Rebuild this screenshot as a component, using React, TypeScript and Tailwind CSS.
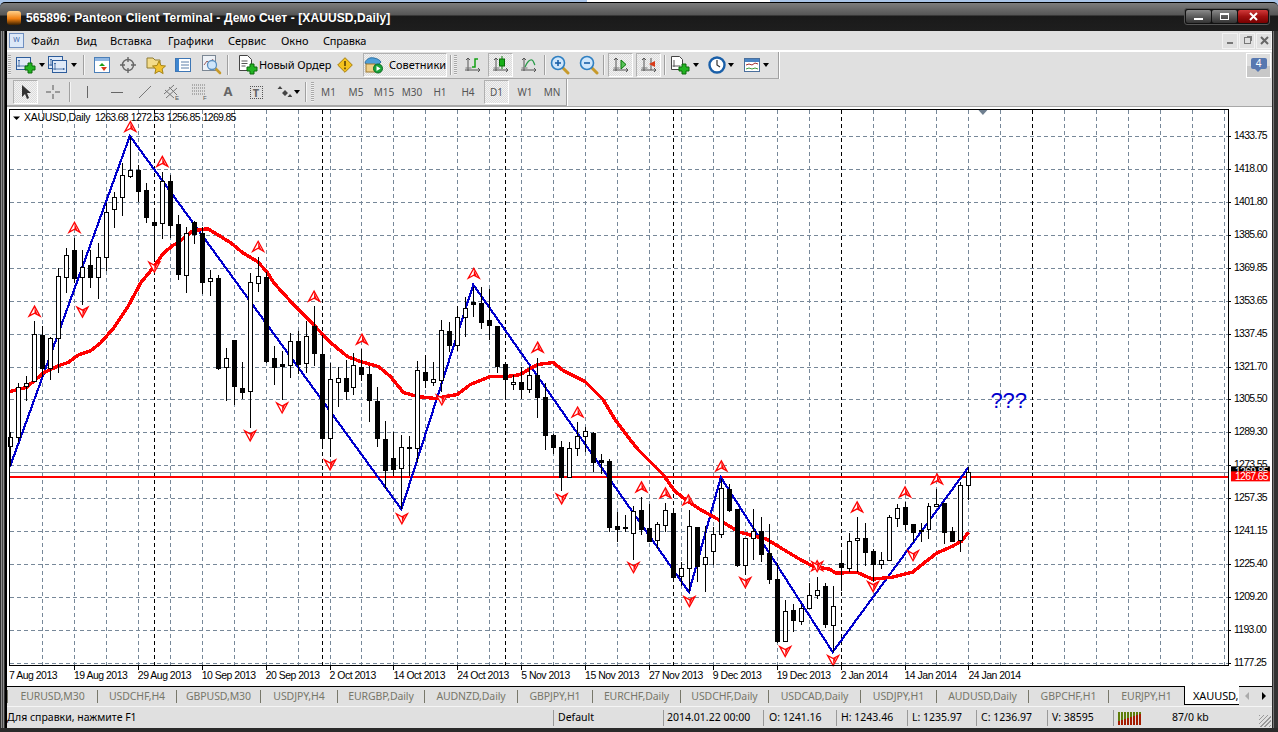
import React from "react";

// hi, lo, bodyTop, bodyBottom, white
const candles: [number, number, number, number, number][] = [
  [433,467,438,447,1],[383,443,387,438,1],[376,402,383,386,1],[321,382,334,381,1],[326,377,335,368,0],[337,380,338,368,1],
  [268,373,276,338,1],[248,293,255,277,1],[238,283,250,278,0],[250,305,267,277,1],[250,288,265,277,0],[243,299,257,277,1],
  [203,271,212,257,1],[192,228,197,209,1],[163,216,175,197,1],[137,178,170,176,1],[165,202,170,191,0],[183,223,190,217,0],
  [208,262,222,225,0],[172,239,181,223,1],[175,238,181,225,0],[215,280,224,274,0],[227,293,233,275,1],[221,244,222,234,0],
  [227,294,233,282,0],[270,296,278,281,1],[275,370,278,368,0],[348,402,358,367,1],[340,406,340,386,0],[362,400,388,392,0],
  [273,429,282,391,1],[257,292,276,283,1],[272,363,277,361,0],[346,385,358,367,0],[351,401,364,366,0],[333,378,341,365,1],
  [331,374,341,364,0],[321,373,336,363,1],[306,366,326,353,0],[335,448,354,439,0],[363,458,379,439,1],[367,408,378,382,1],
  [360,401,378,391,0],[353,395,365,387,1],[349,381,367,374,0],[366,423,374,401,0],[387,448,402,439,0],[422,490,440,471,0],
  [433,477,459,470,0],[436,510,448,469,1],[437,477,448,449,1],[361,463,370,449,1],[355,388,372,380,0],[362,386,379,382,1],
  [320,392,330,380,1],[322,352,331,345,0],[306,351,317,345,1],[297,337,308,317,1],[287,317,302,304,0],[287,329,303,322,0],
  [289,340,320,325,0],[326,373,326,366,0],[364,400,364,379,0],[375,390,382,384,1],[367,400,382,389,0],[367,393,375,389,1],
  [358,419,375,397,0],[383,451,397,436,0],[435,455,436,448,0],[442,492,448,478,0],[443,479,449,478,1],[423,457,437,449,1],
  [428,453,432,437,1],[433,473,434,463,0],[455,475,461,463,0],[460,533,462,528,0],[513,543,527,530,0],[516,533,528,529,0],
  [507,561,512,534,1],[498,536,511,530,0],[505,543,529,542,0],[523,550,525,541,1],[504,533,511,526,1],[513,578,514,578,0],
  [563,587,569,577,1],[511,593,527,569,1],[528,583,528,567,0],[527,593,558,565,1],[528,566,535,552,1],[480,539,489,535,1],
  [485,513,490,511,0],[510,568,510,566,0],[539,576,539,566,1],[510,561,532,539,1],[518,563,532,555,0],[525,585,554,580,0],
  [564,644,580,642,0],[601,643,612,642,1],[605,633,611,621,0],[605,626,609,622,1],[584,609,596,609,1],[578,600,591,596,1],
  [584,629,587,625,0],[587,653,607,626,1],[553,592,564,568,0],[534,573,542,569,1],[518,573,539,541,1],[524,567,539,553,0],
  [550,583,552,565,0],[553,570,561,565,1],[516,562,518,561,1],[505,528,509,519,1],[503,532,508,525,0],[525,543,525,533,0],
  [524,543,531,532,0],[504,540,507,530,1],[490,508,505,507,1],[504,545,504,533,0],[528,543,532,542,0],[483,553,486,541,1],
  [468,501,473,486,1],
];

const maLine = "9,392 25,388 43,373 58,366 67,363 78,355 90,351 100,343 113,328 127,307 140,283 153,267 163,253 173,245 177,243 192,231 207,229 217,235 230,243 242,253 257,262 267,273 273,283 293,305 310,322 330,343 347,357 360,362 378,367 390,377 403,393 417,397 435,399 457,395 470,385 490,377 507,377 520,375 537,365 553,363 563,371 585,382 603,400 615,420 630,440 638,450 650,462 663,475 675,492 688,502 700,510 718,520 740,533 767,540 780,548 800,560 813,567 830,570 836,574 857,573 873,580 893,578 913,573 923,565 937,554 953,547 962,542 969,533";
const zigzag = "9,467 129,136 401,510 473,285 689,593 721,478 833,653 969,468";

const upMarks = [[33,312],[73,228],[129,127],[161,162],[257,247],[313,297],[361,340],[473,274],[537,348],[577,413],[641,488],[665,494],[688,501],[721,467],[817,567],[857,508],[905,493],[937,480]];
const downMarks = [[81,312],[153,267],[249,436],[281,408],[329,465],[401,519],[441,400],[561,499],[633,568],[689,602],[745,583],[785,652],[817,567],[833,661],[873,587],[913,556]];

const prices = ["1433.75","1418.00","1401.80","1385.60","1369.85","1353.65","1337.45","1321.70","1305.50","1289.30","1273.55","1257.35","1241.15","1225.40","1209.20","1193.00","1177.25"];
const dates = ["7 Aug 2013","19 Aug 2013","29 Aug 2013","10 Sep 2013","20 Sep 2013","2 Oct 2013","14 Oct 2013","24 Oct 2013","5 Nov 2013","15 Nov 2013","27 Nov 2013","9 Dec 2013","19 Dec 2013","2 Jan 2014","14 Jan 2014","24 Jan 2014"];
const separators = [153, 321, 505, 673, 841, 1033];

const tabs = [
  { name: "EURUSD,M30", w: "w-[90px]" },
  { name: "USDCHF,H4", w: "w-[79px]" },
  { name: "GBPUSD,M30", w: "w-[84px]" },
  { name: "USDJPY,H4", w: "w-[77px]" },
  { name: "EURGBP,Daily", w: "w-[87px]" },
  { name: "AUDNZD,Daily", w: "w-[93px]" },
  { name: "GBPJPY,H1", w: "w-[75px]" },
  { name: "EURCHF,Daily", w: "w-[88px]" },
  { name: "USDCHF,Daily", w: "w-[88px]" },
  { name: "USDCAD,Daily", w: "w-[92px]" },
  { name: "USDJPY,H1", w: "w-[76px]" },
  { name: "AUDUSD,Daily", w: "w-[92px]" },
  { name: "GBPCHF,H1", w: "w-[80px]" },
  { name: "EURJPY,H1", w: "w-[76px]" },
];

const Mark = ({ x, y, up }: { x: number; y: number; up: boolean }) => (
  <g transform={`translate(${x + 0.5} ${y}) scale(1 ${up ? 1 : -1})`}>
    <path d="M0 -5.500L5.500 4.500L0 1.500L-5.500 4.500Z" fill="#fff" stroke="#ff0000" strokeWidth="1.300" />
    <path d="M0 -4.500L3.200 3L0 1Z" fill="#ff0000" />
  </g>
);

const axisSize = 10.5;
const axisSpacing = -0.7;

const Chart = () => (
  <svg width="1265" height="579" viewBox="7 108 1265 579" className="block bg-white font-['Liberation_Sans',sans-serif]">
    <g shapeRendering="crispEdges" stroke="#778899" strokeDasharray="4 3">
      {prices.map((_, i) => (
        <line key={i} x1="9" x2="1229" y1={136.5 + i * 33} y2={136.5 + i * 33} />
      ))}
      {Array.from({ length: 38 }, (_, i) => (
        <line key={i} x1={41.5 + i * 32} x2={41.5 + i * 32} y1="110" y2="666" />
      ))}
    </g>
    <g shapeRendering="crispEdges" stroke="#000" strokeDasharray="4 3">
      {separators.map((x) => (
        <line key={x} x1={x + 0.5} x2={x + 0.5} y1="110" y2="666" />
      ))}
    </g>
    <g shapeRendering="crispEdges">
      <line x1="9" x2="1229" y1="473.5" y2="473.5" stroke="#8a96a3" />
      <rect x="9" y="477" width="1220" height="2" fill="#ff0000" />
    </g>
    <polyline points={zigzag} fill="none" stroke="#0000cd" strokeWidth="2.200" shapeRendering="crispEdges" />
    <polyline points={maLine} fill="none" stroke="#ff0000" strokeWidth="3.400" strokeLinejoin="round" shapeRendering="crispEdges" />
    {upMarks.map(([x, y]) => <Mark key={`u${x}`} x={x} y={y} up />)}
    {downMarks.map(([x, y]) => <Mark key={`d${x}`} x={x} y={y} up={false} />)}
    <g shapeRendering="crispEdges">
      {candles.map(([hi, lo, top, bot, white], i) => {
        const x = 9 + i * 8;
        return (
          <g key={i}>
            <line x1={x + 0.5} x2={x + 0.5} y1={hi} y2={lo} stroke="#000" />
            <rect x={x - 1.5} y={top + 0.5} width="4" height={Math.max(bot - top, 1)} fill={white ? "#fff" : "#000"} stroke="#000" />
          </g>
        );
      })}
    </g>
    {/* chart frame */}
    <rect x="8.500" y="109.500" width="1221" height="557" fill="none" stroke="#000" shapeRendering="crispEdges" />
    <path d="M979 110h9l-4.500 5z" fill="#6f7f90" />
    <path d="M12 116.500h7l-3.500 3.500z" fill="#000" />
    <text x="23" y="121" fontSize="10.500" letterSpacing="-0.3" fill="#000">XAUUSD,Daily</text>
    <text x="94" y="121" fontSize={axisSize} letterSpacing={axisSpacing} fill="#000">1263.68</text>
    <text x="130" y="121" fontSize={axisSize} letterSpacing={axisSpacing} fill="#000">1272.53</text>
    <text x="166" y="121" fontSize={axisSize} letterSpacing={axisSpacing} fill="#000">1256.85</text>
    <text x="202" y="121" fontSize={axisSize} letterSpacing={axisSpacing} fill="#000">1269.85</text>
    <text x="991" y="409" fontSize="22" fill="#0000cd">???</text>
    {/* price axis */}
    {prices.map((p, i) => (
      <g key={p}>
        <line x1="1229" x2="1232" y1={136.5 + i * 33} y2={136.5 + i * 33} stroke="#000" shapeRendering="crispEdges" />
        <text x="1235" y={139 + i * 33} fontSize={axisSize} letterSpacing={axisSpacing} fill="#000">{p}</text>
      </g>
    ))}
    <rect x="1232" y="467" width="39" height="6" fill="#000" />
    <text x="1236" y="476" fontSize={axisSize} letterSpacing={axisSpacing} fill="#fff">1269.85</text>
    <rect x="1232" y="472" width="39" height="10" fill="#ff0000" />
    <text x="1236" y="481" fontSize={axisSize} letterSpacing={axisSpacing} fill="#fff">1267.65</text>
    {/* date axis */}
    {dates.map((d, i) => (
      <g key={d}>
        {i > 0 && <line x1={9.5 + i * 64} x2={9.5 + i * 64} y1="667" y2="671" stroke="#000" shapeRendering="crispEdges" />}
        <text x={i === 0 ? 8 : 9 + i * 64} y="680" fontSize={axisSize} letterSpacing="-0.5" fill="#000">{d}</text>
      </g>
    ))}
  </svg>
);

const Plus = ({ x, y }: { x: number; y: number }) => (
  <path transform={`translate(${x} ${y})`} d="M3 0h4v3h3v4H7v3H3V7H0V3h3z" fill="#22b422" stroke="#0b6b0b" strokeWidth="1" />
);

const Arrow = () => <span className="ml-[2px] w-0 h-0 border-x-[3px] border-x-transparent border-t-[4px] border-t-black" />;

const Sep = ({ m = "" }: { m?: string }) => <span className={`w-[1px] h-[20px] bg-[#a0a0a0] shadow-[1px_0_0_#f5f5f5] ${m}`} />;

const Grip = ({ m = "" }: { m?: string }) => (
  <span className={`w-[3px] h-[20px] bg-[repeating-linear-gradient(to_bottom,#a8a8a8_0_1px,#efefef_1px_2px)] ${m}`} />
);

const Btn = ({ w, active, children }: { w: string; active?: boolean; children: React.ReactNode }) => (
  <span
    className={`${w} h-[24px] flex items-center justify-center shrink-0 ${
      active
        ? "border border-t-[#b0b0b0] border-l-[#b0b0b0] border-b-white border-r-white bg-[repeating-conic-gradient(#dcdcdc_0_25%,#f2f2f2_0_50%)] bg-[length:2px_2px]"
        : ""
    }`}
  >
    {children}
  </span>
);

const Svg = ({ w = 20, h = 20, children }: { w?: number; h?: number; children: React.ReactNode }) => (
  <svg width={w} height={h} viewBox={`0 0 ${w} ${h}`} className="shrink-0">{children}</svg>
);

const Axes = ({ children }: { children?: React.ReactNode }) => (
  <Svg w={18} h={18}>
    <path d="M4 2v13M1 14h15M4 2l-2 2M4 2l2 2M16 14l-2-2M16 14l-2 2" fill="none" stroke="#555" />
    <path d="M1.500 12h6" stroke="#777" />
    {children}
  </Svg>
);

const Doc = ({ x, y }: { x: number; y: number }) => (
  <g transform={`translate(${x} ${y})`}>
    <rect x="0.500" y="0.500" width="14" height="12" fill="#dfe9f7" stroke="#2d5c9a" />
    <path d="M3 3v7M1 9h12M3 3l-1 1M3 3l1 1M12 9l-1-1M12 9l-1 1" fill="none" stroke="#2d5c9a" strokeWidth=".8" />
  </g>
);

const Lens = ({ plus }: { plus?: boolean }) => (
  <Svg w={20} h={20}>
    <path d="M12 12l6 6" stroke="#c79a2b" strokeWidth="3" strokeLinecap="round" />
    <circle cx="8" cy="8" r="6.500" fill="#cfe6fb" stroke="#2f7fc1" strokeWidth="1.600" />
    <path d="M5 8h6" stroke="#1a5fa8" strokeWidth="1.600" />
    {plus && <path d="M8 5v6" stroke="#1a5fa8" strokeWidth="1.600" />}
  </Svg>
);

const ToolbarOne = () => (
  <div className="flex items-center gap-0 w-[772px] h-[27px] border-r border-r-[#a0a0a0] border-b border-b-[#a8a8a8] shadow-[1px_0_0_#fff] pl-[1px]">
    <Grip m="mr-[3px]" />
    <Btn w="w-[32px]">
      <Svg w={21} h={18}><Doc x={0} y={1} /><Plus x={9} y={7} /></Svg>
      <Arrow />
    </Btn>
    <Btn w="w-[32px]">
      <Svg w={21} h={18}><Doc x={0} y={0} /><Doc x={4} y={4} /></Svg>
      <Arrow />
    </Btn>
    <Sep m="ml-[5px] mr-[6px]" />
    <Btn w="w-[24px]">
      <Svg w={17} h={17}>
        <rect x="0.500" y="0.500" width="15" height="15" fill="#fff" stroke="#4b7fb8" />
        <rect x="1" y="1" width="14" height="3" fill="#8fb6e2" />
        <path d="M5 9l3-3 3 3z" fill="#18a018" />
        <path d="M7 10l3 4 3-4z" fill="#d83a1a" />
      </Svg>
    </Btn>
    <Btn w="w-[28px]">
      <Svg w={18} h={18}>
        <circle cx="9" cy="9" r="5.500" fill="none" stroke="#666" strokeWidth="1.400" />
        <path d="M9 1v5M9 12v5M1 9h5M12 9h5" stroke="#666" strokeWidth="1.400" />
      </Svg>
    </Btn>
    <Btn w="w-[27px]">
      <Svg w={20} h={20}>
        <path d="M1 3h6l2 2h5v8H1z" fill="#f3dc8a" stroke="#8f7a30" />
        <path d="M13 6l2 4.500 4.500.5-3.400 3 1 4.600-4.100-2.500-4.100 2.500 1-4.600-3.400-3 4.500-.5z" fill="#f2c230" stroke="#a58415" />
      </Svg>
    </Btn>
    <Btn w="w-[28px]">
      <Svg w={16} h={16}>
        <rect x="0.500" y="1.500" width="15" height="13" fill="#fff" stroke="#3d76b5" />
        <rect x="1" y="2" width="3" height="12" fill="#3f86d0" />
        <path d="M6 5h8M6 8h8M6 11h8" stroke="#5d7ea8" />
      </Svg>
    </Btn>
    <Btn w="w-[30px]">
      <Svg w={20} h={20}>
        <rect x="0.500" y="0.500" width="13" height="15" fill="#eef2f7" stroke="#7b8794" />
        <path d="M2 10l3-4 3 3 3-5" fill="none" stroke="#9a6060" />
        <path d="M13 13l5 5" stroke="#c79a2b" strokeWidth="2.600" strokeLinecap="round" />
        <circle cx="10" cy="10" r="4.500" fill="#cfe6fb" stroke="#5a8fc0" strokeWidth="1.300" />
      </Svg>
    </Btn>
    <Sep m="mr-[10px]" />
    <Svg w={20} h={20}>
      <path d="M1.500.500h8l4 4v11h-12z" fill="#fff" stroke="#444" />
      <path d="M3.500 6h6M3.500 8.500h6M3.500 11h4" stroke="#555" />
      <Plus x={9} y={9} />
    </Svg>
    <span className="ml-[1px] w-[75px] text-[11px] tracking-[-0.1px] text-black whitespace-nowrap">Новый Ордер</span>
    <Btn w="w-[22px]">
      <Svg w={16} h={16}>
        <path d="M8 .700L15.300 8 8 15.300.700 8z" fill="#f3c21d" stroke="#a57d11" />
        <path d="M8 4v5M8 10.500v1.800" stroke="#5a4206" strokeWidth="1.600" />
      </Svg>
    </Btn>
    <span className="ml-[7px]">
      <Btn w="w-[84px]" active>
        <Svg w={20} h={18}>
          <path d="M1 7c1-4 5-6 9-5 3 .500 6 2 7 4l-3 3H4z" fill="#4f9fd8" stroke="#2b6fa3" />
          <rect x="2" y="8" width="9" height="8" fill="#f0d08a" stroke="#9c7a35" />
          <circle cx="14" cy="12.500" r="4.500" fill="#19a53b" stroke="#0c6b22" />
          <path d="M12.500 10l4 2.500-4 2.500z" fill="#fff" />
        </Svg>
        <span className="ml-[5px] text-[11px] text-black whitespace-nowrap">Советники</span>
      </Btn>
    </span>
    <Sep m="ml-[3px]" />
    <Grip m="ml-[3px] mr-[4px]" />
    <Btn w="w-[24px]">
      <Axes><path d="M8 11h3V3h3" fill="none" stroke="#12a012" strokeWidth="1.500" /></Axes>
    </Btn>
    <span className="ml-[3px]">
      <Btn w="w-[25px]" active>
        <Axes>
          <path d="M10 0v13" stroke="#0a7a0a" />
          <rect x="7.500" y="3" width="5" height="7" fill="#18b018" stroke="#0a6a0a" />
        </Axes>
      </Btn>
    </span>
    <Btn w="w-[31px]">
      <Axes><path d="M5 11c2-5 5-8 7-7s2 4 3 5" fill="none" stroke="#2b9b4a" strokeWidth="1.300" /></Axes>
    </Btn>
    <Sep />
    <span className="ml-[1px]"><Btn w="w-[28px]"><Lens plus /></Btn></span>
    <Btn w="w-[29px]"><Lens /></Btn>
    <Sep m="mr-[4px]" />
    <Btn w="w-[25px]" active>
      <Axes><path d="M9 4l5 4.500-5 4.500z" fill="#58c458" stroke="#0a7a0a" /></Axes>
    </Btn>
    <span className="ml-[3px]">
      <Btn w="w-[25px]" active>
        <Axes><path d="M11 2v12" stroke="#555" /><path d="M9 8l6-3v6z" fill="#d83a1a" /></Axes>
      </Btn>
    </span>
    <Sep m="ml-[3px] mr-[4px]" />
    <Btn w="w-[30px]">
      <Svg w={22} h={20}>
        <path d="M2.500 1.500h8l3 3v10h-11z" fill="#fff" stroke="#444" />
        <path d="M5 5v7M3.500 11h8" stroke="#555" />
        <Plus x={10} y={9} />
      </Svg>
      <Arrow />
    </Btn>
    <span className="ml-[7px]">
      <Btn w="w-[30px]">
        <Svg w={18} h={18}>
          <circle cx="9" cy="9" r="7.500" fill="#fff" stroke="#1a5fa8" strokeWidth="2.400" />
          <path d="M9 4v5l3 2" fill="none" stroke="#333" strokeWidth="1.200" />
        </Svg>
        <Arrow />
      </Btn>
    </span>
    <span className="ml-[5px]">
      <Btn w="w-[30px]">
        <Svg w={17} h={15}>
          <rect x="0.500" y="0.500" width="15" height="13" fill="#fff" stroke="#4a6f9c" />
          <rect x="1" y="1" width="14" height="3" fill="#4a84c4" />
          <path d="M2 7l3-1 3 1 3-2 3 1" fill="none" stroke="#a03030" />
          <path d="M2 11l3-1 3 1 3-1 3 1" fill="none" stroke="#3a9a3a" />
        </Svg>
        <Arrow />
      </Btn>
    </span>
  </div>
);

const Period = ({ w, label, active }: { w: string; label: string; active?: boolean }) => (
  <Btn w={w} active={active}><span className="mt-[1px] text-[10px] text-[#555]">{label}</span></Btn>
);

const ToolbarTwo = () => (
  <div className="flex items-center w-[560px] h-[27px] border-r border-r-[#a0a0a0] border-b border-b-[#a8a8a8] shadow-[1px_0_0_#fff] pl-[6px]">
    <Btn w="w-[25px]" active>
      <Svg w={12} h={16}><path d="M2 1v12l3-3 2 5 2-1-2-5h4z" fill="#333" /></Svg>
    </Btn>
    <Btn w="w-[30px]">
      <Svg w={16} h={16}><path d="M8 1v5M8 10v5M1 8h5M10 8h5" stroke="#555" /></Svg>
    </Btn>
    <Sep m="mx-[1px]" />
    <Btn w="w-[33px]"><Svg w={3} h={14}><path d="M1.500 1v12" stroke="#666" /></Svg></Btn>
    <Btn w="w-[25px]"><Svg w={14} h={3}><path d="M1 1.500h12" stroke="#666" /></Svg></Btn>
    <Btn w="w-[31px]"><Svg w={14} h={14}><path d="M1 13L13 1" stroke="#777" /></Svg></Btn>
    <Btn w="w-[23px]">
      <Svg w={18} h={16}>
        <path d="M1 10L11 1M3 14L14 4M2 6l9 8M6 3l8 8" stroke="#777" />
        <text x="12" y="16" fontSize="6" fill="#555" fontFamily="Liberation Sans">E</text>
      </Svg>
    </Btn>
    <Btn w="w-[34px]">
      <Svg w={18} h={16}>
        <path d="M1 1h13M1 4h13M1 7h13M1 10h13" stroke="#777" strokeDasharray="1 1" />
        <text x="12" y="16" fontSize="6" fill="#555" fontFamily="Liberation Sans">F</text>
      </Svg>
    </Btn>
    <Btn w="w-[22px]"><span className="text-[13px] font-bold text-[#666]">A</span></Btn>
    <Btn w="w-[34px]">
      <span className="w-[13px] h-[13px] border border-dotted border-[#555] flex items-center justify-center text-[11px] font-bold text-[#666] leading-none">T</span>
    </Btn>
    <Btn w="w-[30px]">
      <Svg w={15} h={14}>
        <path d="M3 1l2.500 3h-5zM8 5l3 3-3 3-3-3zM13 9l-2.500 3h5z" fill="#444" />
      </Svg>
      <Arrow />
    </Btn>
    <Sep m="ml-[2px]" />
    <Grip m="ml-[5px]" />
    <Period w="w-[27px] ml-[1px]" label="M1" />
    <Period w="w-[28px]" label="M5" />
    <Period w="w-[28px]" label="M15" />
    <Period w="w-[28px]" label="M30" />
    <Period w="w-[28px]" label="H1" />
    <Period w="w-[28px]" label="H4" />
    <span className="ml-[2px]"><Period w="w-[25px]" label="D1" active /></span>
    <Period w="w-[32px]" label="W1" />
    <Period w="w-[22px]" label="MN" />
  </div>
);

const Corner = ({ children }: { children: React.ReactNode }) => (
  <span className="w-[16px] h-[16px] border border-[#f2f2f2] flex items-center justify-center">{children}</span>
);

const statusCell = "shrink-0 border-l border-l-[#999] whitespace-nowrap";

export default function App() {
  return (
    <div className="w-[1278px] h-[732px] overflow-hidden flex flex-col bg-[#a8c3e6] font-['Noto_Sans',sans-serif]">
      <div className="h-[2px] shrink-0 flex">
        <span className="w-[587px] bg-[#a8c3e6]" />
        <span className="w-[183px] bg-white" />
        <span className="flex-1 bg-[#a8c3e6]" />
      </div>
      {/* title bar */}
      <div className="h-[29px] shrink-0 rounded-t-[5px] border-t border-t-black bg-[linear-gradient(to_bottom,#7c7c7c_0,#565656_12px,#1a1a1a_13px,#1e1e1e_100%)] flex items-center pl-[7px] pr-[8px]">
        <span className="w-[14px] h-[14px] mt-[1px] rounded-[3px] bg-[linear-gradient(to_bottom,#ffd08a,#f07f10_55%,#3a2000)]" />
        <span className="ml-[5px] mt-[1px] text-[12px] font-['Liberation_Sans',sans-serif] font-bold text-white whitespace-nowrap tracking-[0.1px]">
          565896: Panteon Client Terminal - Демо Счет - [XAUUSD,Daily]
        </span>
        <div className="ml-auto mb-[1px] flex gap-[1px] p-[1px] rounded-[3px] bg-[#111] border border-[#555]">
          <span className="w-[25px] h-[13px] flex items-center justify-center rounded-[2px] bg-[linear-gradient(to_bottom,#8a8a8a,#5c5c5c_50%,#333)]">
            <span className="w-[9px] h-[2px] mt-[5px] bg-white" />
          </span>
          <span className="w-[25px] h-[13px] flex items-center justify-center rounded-[2px] bg-[linear-gradient(to_bottom,#8a8a8a,#5c5c5c_50%,#333)]">
            <span className="w-[9px] h-[7px] border border-t-2 border-white" />
          </span>
          <span className="w-[30px] h-[13px] flex items-center justify-center rounded-[2px] bg-[linear-gradient(to_bottom,#d03a3a,#a01010_50%,#700)]">
            <svg width="9" height="9" viewBox="0 0 9 9"><path d="M1 1l7 7M8 1L1 8" stroke="#fff" strokeWidth="2" /></svg>
          </span>
        </div>
      </div>

      <div className="flex h-[697px] shrink-0 bg-[#1a1a1a]">
        {/* left frame */}
        <div className="w-[7px] shrink-0 bg-[linear-gradient(to_right,#2e2e2e_0_1px,#8c8c8c_1px_2px,#444_2px_3px,#8c8c8c_3px_4px,#333_4px_5px,#000_5px_7px)]" />

        <div className="w-[1265px] shrink-0 flex flex-col bg-[#e0e0e0]">
          {/* menu */}
          <div className="h-[19px] shrink-0 flex items-center text-[11px] text-black">
            <span className="ml-[2px] w-[15px] h-[15px] border border-[#6f8fc0] bg-[#dce8f8] flex items-center justify-center text-[7px] text-[#3a64a8]">W</span>
            <span className="ml-[7px] mt-[1px] w-[45px]">Файл</span>
            <span className="mt-[1px] w-[34px]">Вид</span>
            <span className="mt-[1px] w-[58px]">Вставка</span>
            <span className="mt-[1px] w-[60px]">Графики</span>
            <span className="mt-[1px] w-[53px]">Сервис</span>
            <span className="mt-[1px] w-[42px]">Окно</span>
            <span className="mt-[1px] tracking-[-0.2px]">Справка</span>
            <div className="ml-auto flex gap-[1px]">
              <Corner><span className="w-[6px] h-[2px] mt-[5px] bg-[#777]" /></Corner>
              <Corner><span className="w-[7px] h-[7px] border border-[#777] shadow-[2px_-2px_0_-1px_#777]" /></Corner>
              <Corner>
                <svg width="9" height="9" viewBox="0 0 9 9"><path d="M1 1l7 7M8 1L1 8" stroke="#666" strokeWidth="2" /></svg>
              </Corner>
            </div>
          </div>
          <div className="h-[2px] shrink-0 bg-white" />
          {/* toolbars */}
          <div className="flex h-[27px] shrink-0 items-center">
            <ToolbarOne />
            <div className="ml-auto mr-[1px] w-[25px] h-[25px] border border-white bg-[linear-gradient(to_bottom,#dedede_50%,#c8c8c8_50%)] flex items-start justify-center pt-[4px]">
              <span className="relative w-[16px] h-[11px] rounded-[2px] bg-[#5878b0] text-white text-[10px] leading-[11px] text-center">
                4
                <span className="absolute left-[4px] top-[11px] border-x-[3px] border-x-transparent border-t-[3px] border-t-[#5878b0]" />
              </span>
            </div>
          </div>
          <div className="flex h-[27px] shrink-0 items-center"><ToolbarTwo /></div>
          <div className="h-[2px] shrink-0 bg-[linear-gradient(to_bottom,#a8a8a8_50%,#fff_50%)]" />

          <Chart />

          {/* tabs */}
          <div className="h-[20px] shrink-0 flex items-center text-[10.5px] tracking-[-0.1px] text-[#77776a] border-t border-t-black relative">
            {tabs.map((t) => (
              <span key={t.name} className={`${t.w} h-[13px] flex items-center justify-center border-l border-l-[#77776a] whitespace-nowrap shrink-0`}>
                {t.name}
              </span>
            ))}
            <span className="absolute left-[1177px] top-[-1px] w-[55px] h-[19px] bg-white border-l border-l-black border-b border-b-black text-[11px] leading-[19px] text-black pl-[8px] whitespace-nowrap">XAUUSD,</span>
            <span className="absolute left-[1238px] top-[5px] border-y-[4px] border-y-transparent border-r-[4px] border-r-[#aaa]" />
            <span className="absolute left-[1255px] top-[5px] border-y-[4px] border-y-transparent border-l-[4px] border-l-black" />
          </div>
          {/* status bar */}
          <div className="h-[22px] shrink-0 flex items-center pt-[1px] text-[10.5px] text-black border-t border-t-[#f5f5f5]">
            <span className="w-[546px] shrink-0 whitespace-nowrap">Для справки, нажмите F1</span>
            <span className={`${statusCell} w-[110px] pl-[4px]`}>Default</span>
            <span className={`${statusCell} w-[100px] pl-[3px]`}>2014.01.22 00:00</span>
            <span className={`${statusCell} w-[73px] pl-[5px]`}>O: 1241.16</span>
            <span className={`${statusCell} w-[71px] pl-[4px]`}>H: 1243.46</span>
            <span className={`${statusCell} w-[69px] pl-[4px]`}>L: 1235.97</span>
            <span className={`${statusCell} w-[71px] pl-[4px]`}>C: 1236.97</span>
            <span className={`${statusCell} w-[66px] pl-[4px]`}>V: 38595</span>
            <span className={`${statusCell} w-[146px] pl-[4px] flex items-center`}>
              <svg width="25" height="13" viewBox="0 0 25 13" shapeRendering="crispEdges">
                {Array.from({ length: 8 }, (_, i) => (
                  <g key={i}>
                    <rect x={i * 3} y="0" width="2" height={9 - i} fill="#5f7d0a" />
                    <rect x={i * 3} y={9 - i} width="2" height={4 + i} fill="#a51c00" />
                  </g>
                ))}
              </svg>
              <span className="ml-[29px]">87/0 kb</span>
            </span>
            <span className="ml-auto mr-[1px] w-[12px] h-[12px] mt-[6px] bg-[repeating-linear-gradient(135deg,#999_0_1px,#e0e0e0_1px_3px)]" />
          </div>
        </div>

        {/* right frame */}
        <div className="w-[6px] shrink-0 bg-[linear-gradient(to_right,#2b2b2b_0_1px,#777_1px_2px,#333_2px_6px)]" />
      </div>
      <div className="h-[4px] shrink-0 bg-[#2a2a2a]" />
    </div>
  );
}
